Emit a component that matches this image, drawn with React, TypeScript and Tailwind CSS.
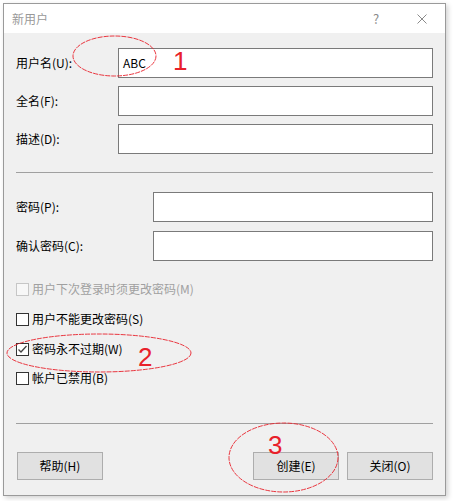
import React from "react";

const font = { fontFamily: '"Noto Sans CJK SC", "Noto Sans", sans-serif' };

function Field({ label, labelW, value, gap }: { label: string; labelW: string; value?: string; gap?: string }) {
  return (
    <div className={`flex items-center h-[30px] ${gap ?? ""}`}>
      <div className={`${labelW} shrink-0 text-[12px] text-black leading-none`}>{label}</div>
      <div className="flex-1 h-[30px] border border-[#7a7a7a] bg-white flex items-center pl-[4px] text-[12px] leading-none text-black">
        {value}
      </div>
    </div>
  );
}

function Check({ label, checked, disabled, cls }: { label: string; checked?: boolean; disabled?: boolean; cls?: string }) {
  return (
    <div className={`flex items-center h-[16px] ${cls ?? ""}`}>
      <div
        className={`w-[13px] h-[13px] border ${disabled ? "border-[#c6c6c6] bg-[#f7f7f7]" : "border-[#333333] bg-white"} flex items-center justify-center`}
      >
        {checked && (
          <svg width="11" height="11" viewBox="0 0 11 11">
            <polyline points="1.5,5.5 4,8 9.5,2" fill="none" stroke="#444" strokeWidth="1.3" />
          </svg>
        )}
      </div>
      <span className={`ml-[3px] text-[12px] leading-none ${disabled ? "text-[#a0a0a0]" : "text-black"}`}>{label}</span>
    </div>
  );
}

function Btn({ label, cls }: { label: string; cls?: string }) {
  return (
    <div
      className={`w-[86px] h-[28px] border border-[#adadad] bg-[#e1e1e1] flex items-center justify-center text-[12px] leading-none text-black ${cls ?? ""}`}
    >
      {label}
    </div>
  );
}

export default function App() {
  return (
    <div className="relative w-[457px] h-[501px] bg-white overflow-hidden" style={font}>
      <div className="pt-[3px] pl-[3px]">
        <div className="w-[443px] border border-[#9a9a9a] bg-[#f0f0f0] shadow-[2px_2px_5px_rgba(0,0,0,0.18)]">
          {/* title bar */}
          <div className="h-[29px] bg-white flex items-center">
            <div className="pl-[8px] flex-1 text-[12px] leading-none text-[#999999]">新用户</div>
            <div className="w-[46px] h-[29px] flex items-center justify-center text-[13px] text-[#8a8a8a] leading-none">?</div>
            <div className="w-[46px] h-[29px] flex items-center justify-center">
              <svg width="10" height="10" viewBox="0 0 10 10">
                <path d="M0.5 0.5 L9.5 9.5 M9.5 0.5 L0.5 9.5" stroke="#8a8a8a" strokeWidth="1" fill="none" />
              </svg>
            </div>
          </div>
          {/* body */}
          <div className="px-[12px] pt-[15px] pb-[15px] flex flex-col">
            <Field label="用户名(U):" labelW="w-[102px]" value="ABC" />
            <Field label="全名(F):" labelW="w-[102px]" gap="mt-[8px]" />
            <Field label="描述(D):" labelW="w-[102px]" gap="mt-[8px]" />
            <div className="mt-[18px] h-px bg-[#a0a0a0]" />
            <Field label="密码(P):" labelW="w-[137px]" gap="mt-[19px]" />
            <Field label="确认密码(C):" labelW="w-[137px]" gap="mt-[9px]" />
            <Check label="用户下次登录时须更改密码(M)" disabled cls="mt-[20px]" />
            <Check label="用户不能更改密码(S)" cls="mt-[14px]" />
            <Check label="密码永不过期(W)" checked cls="mt-[14px]" />
            <Check label="帐户已禁用(B)" cls="mt-[13px]" />
            <div className="mt-[37px] h-px bg-[#a0a0a0]" />
            <div className="mt-[28px] flex items-center">
              <Btn label="帮助(H)" cls="ml-px" />
              <div className="flex-1" />
              <Btn label="创建(E)" />
              <Btn label="关闭(O)" cls="ml-[8px]" />
            </div>
          </div>
        </div>
      </div>

      {/* annotations */}
      <svg className="absolute left-0 top-0 pointer-events-none" width="457" height="501">
        <ellipse cx="114.5" cy="56" rx="41.5" ry="20" fill="none" stroke="#e8202a" strokeWidth="0.9" strokeDasharray="5 1" />
        <ellipse cx="99" cy="353" rx="92" ry="19" fill="none" stroke="#e8202a" strokeWidth="0.9" strokeDasharray="5 1" />
        <ellipse cx="283.5" cy="457.5" rx="54.5" ry="34.5" fill="none" stroke="#e8202a" strokeWidth="0.9" strokeDasharray="5 1" />
      </svg>
      <span className="absolute left-[173px] top-[48px] text-[26px] leading-none text-[#e8202a]" style={{ fontFamily: '"Liberation Sans", sans-serif' }}>1</span>
      <span className="absolute left-[138px] top-[344px] text-[26px] leading-none text-[#e8202a]" style={{ fontFamily: '"Liberation Sans", sans-serif' }}>2</span>
      <span className="absolute left-[268px] top-[432px] text-[26px] leading-none text-[#e8202a]" style={{ fontFamily: '"Liberation Sans", sans-serif' }}>3</span>
    </div>
  );
}
